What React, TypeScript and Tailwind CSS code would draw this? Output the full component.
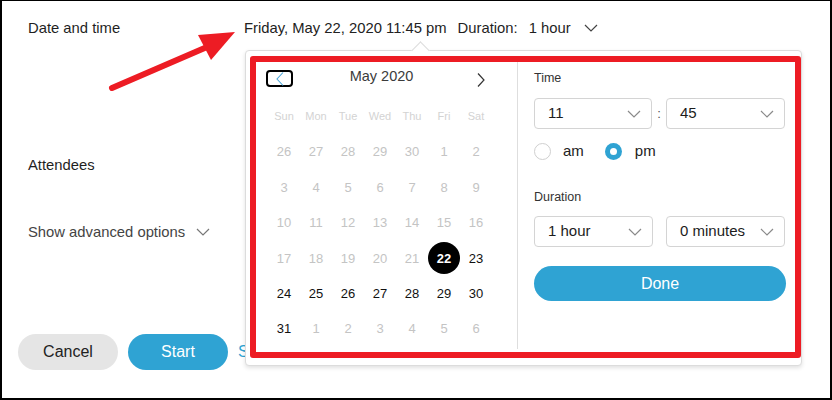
import React from "react";

const BLUE = "#2fa3d3";

function ChevronDown({ className = "", color = "#555" }: { className?: string; color?: string }) {
  return (
    <svg className={className} width="14" height="8" viewBox="0 0 14 8" fill="none">
      <polyline points="1,1 7,7 13,1" stroke={color} strokeWidth="1.2" />
    </svg>
  );
}

function Select({ value, width }: { value: string; width: string }) {
  return (
    <div
      className={`${width} h-[31px] flex items-center justify-between pl-[13px] pr-[10px] border border-[#d4d4d4] rounded-[4px] text-[15px] text-[#1c1c1c]`}
    >
      <span>{value}</span>
      <ChevronDown color="#8a8a8a" />
    </div>
  );
}

type Day = { n: number; on?: boolean; sel?: boolean };

const weeks: Day[][] = [
  [26, 27, 28, 29, 30, 1, 2].map((n) => ({ n })),
  [3, 4, 5, 6, 7, 8, 9].map((n) => ({ n })),
  [10, 11, 12, 13, 14, 15, 16].map((n) => ({ n })),
  [
    { n: 17 },
    { n: 18 },
    { n: 19 },
    { n: 20 },
    { n: 21 },
    { n: 22, on: true, sel: true },
    { n: 23, on: true },
  ],
  [24, 25, 26, 27, 28, 29, 30].map((n) => ({ n, on: true })),
  [{ n: 31, on: true }, ...[1, 2, 3, 4, 5, 6].map((n) => ({ n }))],
];

function Calendar() {
  return (
    <div className="w-[271px] shrink-0 pt-[16px]">
      {/* header */}
      <div className="relative h-[20px] flex items-center justify-center">
        <div className="absolute left-[20px] top-[3px] w-[27px] h-[17px] border-2 border-black rounded-[4px] flex items-center justify-center">
          <svg width="8" height="14" viewBox="0 0 8 14" fill="none">
            <polyline points="7,0.5 1,7 7,13.5" stroke="#4aa6d8" strokeWidth="1.1" />
          </svg>
        </div>
        <span className="text-[14.5px] text-[#3b3b3b]">May 2020</span>
        <svg className="absolute left-[231px] top-[6px]" width="8" height="14" viewBox="0 0 8 14" fill="none">
          <polyline points="1,0.5 7,7 1,13.5" stroke="#333" strokeWidth="1.2" />
        </svg>
      </div>

      <div className="mt-[12px] pl-[22px] pr-[25px] grid grid-cols-7 auto-rows-[35.4px]">
        {["Sun", "Mon", "Tue", "Wed", "Thu", "Fri", "Sat"].map((d) => (
          <div key={d} className="flex items-center justify-center text-[11px] text-[#d3d3d3]">
            {d}
          </div>
        ))}
        {weeks.flat().map((d, i) => (
          <div key={i} className="flex items-center justify-center">
            {d.sel ? (
              <span className="w-[32px] h-[32px] rounded-full bg-black text-white flex items-center justify-center text-[13px] font-bold">
                {d.n}
              </span>
            ) : (
              <span className={`text-[13px] ${d.on ? "text-[#111]" : "text-[#c4c4c4]"}`}>{d.n}</span>
            )}
          </div>
        ))}
      </div>
    </div>
  );
}

function TimePanel() {
  return (
    <div className="pl-[16px] pt-[19px] flex flex-col">
      <div className="text-[12.5px] leading-[16px] text-[#333]">Time</div>
      <div className="mt-[12px] flex items-center">
        <Select value="11" width="w-[118px]" />
        <span className="w-[14px] text-center text-[13px] text-[#555]">:</span>
        <Select value="45" width="w-[119px]" />
      </div>
      <div className="mt-[13px] h-[18px] flex items-center text-[15px] text-[#222]">
        <span className="w-[17px] h-[17px] rounded-full border border-[#cfcfcf]" />
        <span className="ml-[12px]">am</span>
        <span className="ml-[21px] w-[17px] h-[17px] rounded-full bg-[#2fa3d3] flex items-center justify-center">
          <span className="w-[7px] h-[7px] rounded-full bg-white" />
        </span>
        <span className="ml-[13px]">pm</span>
      </div>
      <div className="mt-[29px] text-[12.5px] leading-[16px] text-[#333]">Duration</div>
      <div className="mt-[11px] flex items-center">
        <Select value="1 hour" width="w-[119px]" />
        <span className="w-[13px]" />
        <Select value="0 minutes" width="w-[119px]" />
      </div>
      <button
        className="mt-[19px] w-[252px] h-[35px] rounded-full text-white text-[16px]"
        style={{ backgroundColor: BLUE }}
      >
        Done
      </button>
    </div>
  );
}

export default function App() {
  return (
    <div className="relative w-[832px] h-[400px] bg-white border-t border-l-2 border-r-2 border-b-2 border-black overflow-hidden font-['Liberation_Sans',Arial,sans-serif] text-[14.8px] text-[#1f1f1f]">
      <div className="pl-[16px] pt-[18px] flex flex-col">
        <div className="pl-[10px] flex items-center h-[18px]">
          <span className="w-[216px]">Date and time</span>
          <span className="text-[#222]">Friday, May 22, 2020 11:45 pm</span>
          <span className="ml-[11px]">Duration:</span>
          <span className="ml-[11px]">1 hour</span>
          <ChevronDown className="ml-[13px]" color="#444" />
        </div>
        <div className="pl-[10px] mt-[119px] h-[18px] flex items-center">Attendees</div>
        <div className="pl-[10px] mt-[49px] h-[18px] flex items-center text-[#444]">
          Show advanced options
          <ChevronDown className="ml-[11px]" color="#777" />
        </div>
        <div className="mt-[93px] flex items-center">
          <button className="w-[100px] h-[36px] rounded-full bg-[#e5e5e5] text-[16px] text-[#222]">Cancel</button>
          <button
            className="ml-[10px] w-[100px] h-[36px] rounded-full text-[16px] text-white"
            style={{ backgroundColor: BLUE }}
          >
            Start
          </button>
          <span className="ml-[10px] text-[16px]" style={{ color: BLUE }}>
            Schedule
          </span>
        </div>
      </div>

      {/* date/time popover */}
      <div className="absolute left-[243px] top-[49px] w-[557px] h-[316px] bg-white border border-[#dcdcdc] rounded-[4px] shadow-[0_2px_4px_rgba(0,0,0,0.12)]">
        <div className="absolute left-[168px] -top-[7px] w-[13px] h-[13px] rotate-45 bg-white border-l border-t border-[#dcdcdc]" />
        <div className="relative flex h-full">
          <Calendar />
          <div className="w-px bg-[#dedede] mt-[6px] mb-[16px]" />
          <TimePanel />
        </div>
        {/* annotation box */}
        <div className="absolute left-[4px] top-[5px] w-[551px] h-[302px] border-[6px] border-[#ed1c24] rounded-[3px] pointer-events-none" />
      </div>

      {/* annotation arrow */}
      <svg className="absolute left-0 top-0 pointer-events-none" width="832" height="400">
        <line x1="110" y1="87" x2="205" y2="46" stroke="#ed1c24" strokeWidth="6" strokeLinecap="round" />
        <polygon points="233,31 196,34 209,59" fill="#ed1c24" />
      </svg>
    </div>
  );
}
